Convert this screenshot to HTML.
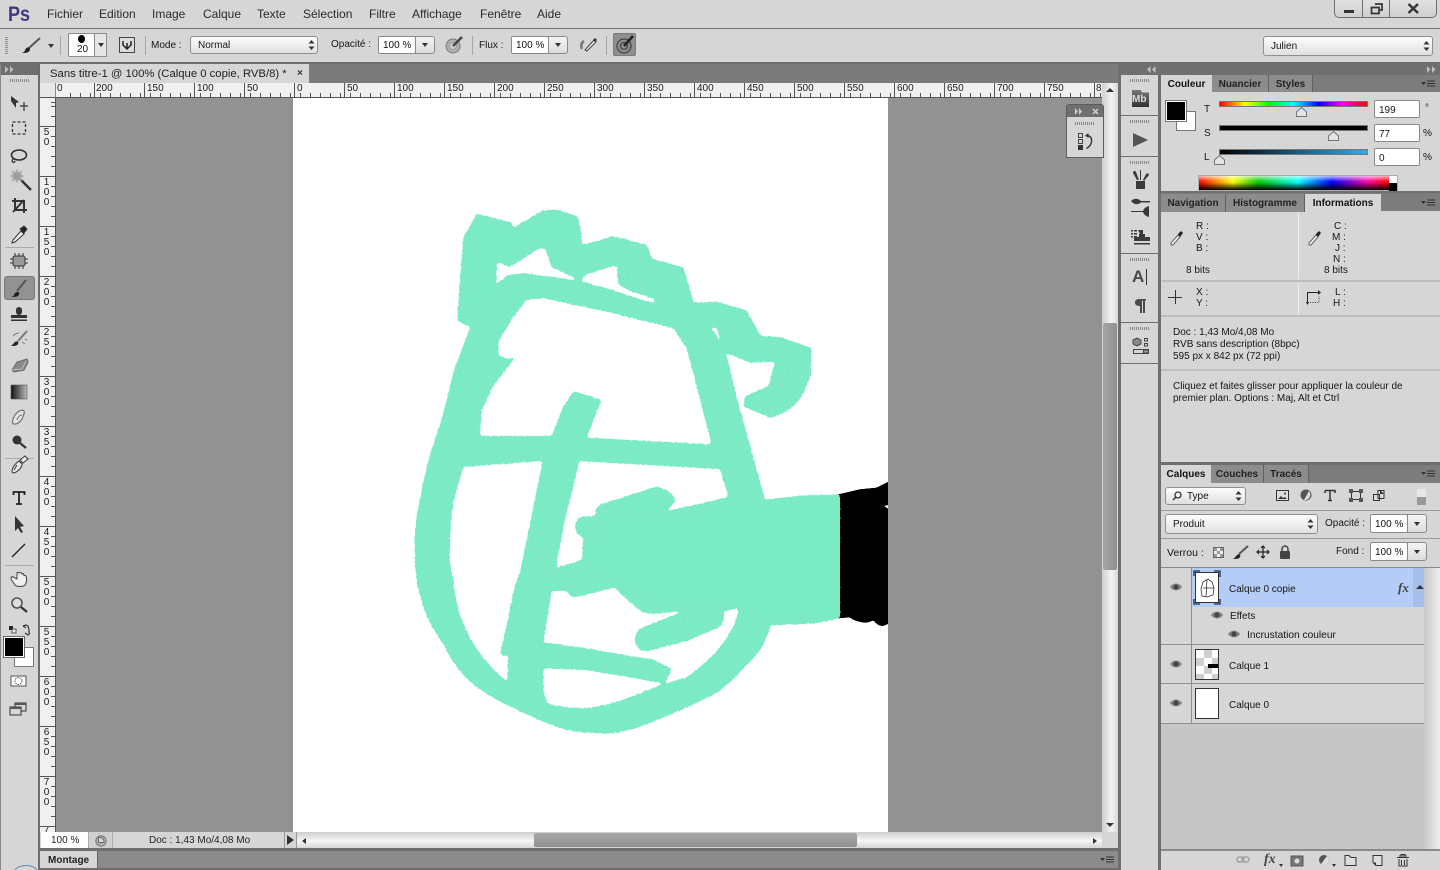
<!DOCTYPE html>
<html lang="fr"><head><meta charset="utf-8"><title>Photoshop</title>
<style>
html,body{margin:0;padding:0;width:1440px;height:870px;overflow:hidden;background:#d6d6d6}
div,span,svg{position:absolute;box-sizing:border-box}
svg{overflow:visible}
.t{font:10px "Liberation Sans",sans-serif;color:#151515;white-space:nowrap;line-height:12px;margin-top:1px}
.m{font-size:12px;color:#2a2a2a;top:8px;margin-top:0}
.r{font:10px "Liberation Sans",sans-serif;color:#1b1b1b;top:83px;line-height:11px}
.v{font:10px/10px "Liberation Sans",sans-serif;color:#1b1b1b;left:43px;width:7px;text-align:center;white-space:pre-line}
.inp{background:#fff;border:1px solid #8a8a8a;border-radius:2px}
.sel{background:linear-gradient(#fdfdfd,#e0e0e0);border:1px solid #8f8f8f;border-radius:3px}
.dd{background:linear-gradient(#f4f4f4,#dcdcdc);border:1px solid #8a8a8a;border-radius:0 3px 3px 0}
.pt{font:bold 10px/19px "Liberation Sans",sans-serif;color:#222;position:absolute;text-align:center;white-space:nowrap;border-right:1px solid #606060;background:#8c8c8c}
.on{background:#d6d6d6;border-right:0;color:#111}
.line{background:#6e6e6e}
.hl{background:#efefef}
.grip{height:3px;background:repeating-linear-gradient(90deg,#8a8a8a 0 1px,transparent 1px 2px)}
</style></head><body>
<div style="left:0;top:0;width:1440px;height:870px;overflow:hidden;background:#d6d6d6">

<!-- MENU BAR -->
<div class="t" style="left:8px;top:2px;font:bold 21px/24px 'Liberation Sans',sans-serif;color:#3f3a80;transform:scaleX(.86);transform-origin:left">Ps</div>
<span class="t m" style="left:47px">Fichier</span>
<span class="t m" style="left:99px">Edition</span>
<span class="t m" style="left:152px">Image</span>
<span class="t m" style="left:203px">Calque</span>
<span class="t m" style="left:257px">Texte</span>
<span class="t m" style="left:303px">Sélection</span>
<span class="t m" style="left:369px">Filtre</span>
<span class="t m" style="left:412px">Affichage</span>
<span class="t m" style="left:480px">Fenêtre</span>
<span class="t m" style="left:537px">Aide</span>
<div style="left:1334px;top:-2px;width:103px;height:20px;border:1px solid #6e6e6e;border-radius:0 0 5px 5px;background:linear-gradient(#e2e2e2,#cfcfcf)"></div>
<div class="line" style="left:1362px;top:0;width:1px;height:18px"></div>
<div class="line" style="left:1389px;top:0;width:1px;height:18px"></div>
<div style="left:1344px;top:10px;width:10px;height:3px;background:#333"></div>
<svg style="left:1370px;top:3px" width="14" height="12"><path d="M5 1h7v6h-2M1.500 4.500h7.500v6h-7.500z" fill="none" stroke="#333" stroke-width="1.700"/></svg>
<svg style="left:1407px;top:3px" width="13" height="11"><path d="M1.500 1L11 10M11 1L1.500 10" fill="none" stroke="#333" stroke-width="2.400"/></svg>

<!-- OPTIONS BAR -->
<div class="line" style="left:0;top:28px;width:1440px;height:1px"></div>
<div class="line" style="left:0;top:62px;width:1440px;height:2px"></div>
<div style="left:5px;top:37px;width:3px;height:18px;background:repeating-linear-gradient(#8f8f8f 0 1px,transparent 1px 2px)"></div>
<svg style="left:20px;top:37px" width="22" height="18"><path d="M20 1L9 11" stroke="#555" stroke-width="2" fill="none"/><path d="M2 16c3 0 5 0 7-1.500 1.500-1.500 1-3.500 0-4-2-.5-3.500 1-4 3-.5 1-1.500 1.800-3 2.500z" fill="#222"/></svg>
<div style="left:48px;top:44px;border:3px solid transparent;border-top:4px solid #333"></div>
<div style="left:60px;top:36px;width:1px;height:19px;background:#a5a5a5"></div>
<div style="left:68px;top:33px;width:39px;height:24px;background:#fff;border:1px solid #8c8c8c;border-radius:2px"></div>
<div style="left:94px;top:33px;width:13px;height:24px;background:#e6e6e6;border:1px solid #8c8c8c"></div>
<div style="left:98px;top:43px;border:3px solid transparent;border-top:4px solid #333"></div>
<div style="left:78px;top:35px;width:7px;height:8px;background:#000;border-radius:50%"></div>
<span class="t" style="left:77px;top:43px">20</span>
<svg style="left:119px;top:37px" width="16" height="16"><rect x=".5" y=".5" width="15" height="15" fill="#dcdcdc" stroke="#444"/><path d="M4 4v4l4 4 4-4V4M8 6v6" fill="none" stroke="#222" stroke-width="1.500"/></svg>
<div style="left:145px;top:36px;width:1px;height:19px;background:#a5a5a5"></div>
<span class="t" style="left:151px;top:39px">Mode :</span>
<div class="sel" style="left:190px;top:36px;width:128px;height:18px"></div>
<span class="t" style="left:198px;top:39px">Normal</span>
<svg style="left:308px;top:40px" width="7" height="10"><path d="M3.500 0L6.500 3.500H.5zM3.500 10L6.500 6.500H.5z" fill="#333"/></svg>
<span class="t" style="left:331px;top:38px">Opacité :</span>
<div class="inp" style="left:378px;top:36px;width:38px;height:18px"></div>
<div class="dd" style="left:415px;top:36px;width:20px;height:18px"></div>
<span class="t" style="left:383px;top:39px;color:#111">100 %</span>
<div style="left:422px;top:43px;border:3px solid transparent;border-top:4px solid #333"></div>
<svg style="left:445px;top:35px" width="19" height="19"><circle cx="8" cy="11" r="7" fill="#b0b0b0" stroke="#777"/><circle cx="8" cy="11" r="3.500" fill="#d0d0d0" stroke="#999"/><path d="M8 11L17 2" stroke="#444" stroke-width="2.500"/></svg>
<div style="left:472px;top:36px;width:1px;height:19px;background:#a5a5a5"></div>
<span class="t" style="left:479px;top:39px">Flux :</span>
<div class="inp" style="left:511px;top:36px;width:38px;height:18px"></div>
<div class="dd" style="left:548px;top:36px;width:20px;height:18px"></div>
<span class="t" style="left:516px;top:39px;color:#111">100 %</span>
<div style="left:555px;top:43px;border:3px solid transparent;border-top:4px solid #333"></div>
<svg style="left:579px;top:36px" width="19" height="17"><path d="M5 5A6 6 0 0 0 3 13" stroke="#777" stroke-width="2.500" fill="none"/><path d="M6 14L15 4l2 2-9 9z" fill="#eee" stroke="#444"/><path d="M14 4l2-2 2 2-2 2z" fill="#333"/></svg>
<div style="left:606px;top:36px;width:1px;height:19px;background:#a5a5a5"></div>
<div style="left:613px;top:33px;width:23px;height:23px;background:#8f8f8f;border:1px solid #7a7a7a;border-radius:2px"></div>
<svg style="left:614px;top:34px" width="21" height="21"><circle cx="10" cy="12" r="7" fill="none" stroke="#444" stroke-width="1.300"/><circle cx="10" cy="12" r="3.500" fill="none" stroke="#444" stroke-width="1.300"/><path d="M10 12L19 2" stroke="#222" stroke-width="2.500"/></svg>
<div class="sel" style="left:1263px;top:36px;width:170px;height:20px"></div>
<span class="t" style="left:1271px;top:40px">Julien</span>
<svg style="left:1423px;top:41px" width="7" height="10"><path d="M3.500 0L6.500 3.500H.5zM3.500 10L6.500 6.500H.5z" fill="#333"/></svg>

<!-- LEFT TOOLBAR -->
<div style="left:1px;top:64px;width:37px;height:11px;background:#6f6f6f"></div>
<svg style="left:5px;top:66px" width="9" height="7"><path d="M0 0l3.500 3.500L0 7zM5 0l3.500 3.500L5 7z" fill="#bdbdbd"/></svg>
<div class="grip" style="left:10px;top:79px;width:19px"></div>
<div style="left:38px;top:64px;width:2px;height:806px;background:#6b6b6b"></div>
<div style="left:0;top:64px;width:1px;height:806px;background:#8a8a8a"></div>
<div style="left:4px;top:276px;width:31px;height:24px;background:#929292;border:1px solid #787878;border-radius:3px"></div>
<div style="left:5px;top:247px;width:29px;height:1px;background:#aaa"></div>
<div style="left:5px;top:458px;width:29px;height:1px;background:#aaa"></div>
<div style="left:5px;top:565px;width:29px;height:1px;background:#aaa"></div>
<svg style="left:0;top:64px" width="40" height="806" fill="none" stroke="#333">
<defs><linearGradient id="gr"><stop offset="0" stop-color="#111"/><stop offset="1" stop-color="#bbb"/></linearGradient></defs>
<g transform="translate(0,2)"><path d="M11 30l8 6-3 1 0 5-5-7z" fill="#333" stroke="none"/><path d="M24 36v9M20 40h8" stroke-width="1.200"/></g>
<g transform="translate(0,-2.500)"><rect x="12.500" y="60.500" width="13" height="12" stroke-dasharray="3 2" stroke-width="1.300"/></g>
<g transform="translate(0,1)"><ellipse cx="19" cy="90" rx="7.500" ry="5" stroke-width="1.600"/><path d="M13 94c-2 3 1 5 2 2" stroke-width="1.300"/></g>
<g transform="translate(0,-2)"><path d="M21 118l10 10" stroke-width="2.400"/><circle cx="17" cy="114" r="5" fill="#aaa" stroke="none"/><path d="M17 107v14M10 114h14M12 109l10 10M22 109l-10 10" stroke="#999" stroke-width=".9"/></g>
<g transform="translate(0,-1)"><path d="M15 135v12h12M12 138h12v12M13 149l11-12" stroke-width="2"/></g>
<g transform="translate(0,-3)"><path d="M13 179l8-9 3 3-9 8-3 1z" fill="#eee" stroke-width="1"/><path d="M20 168l4-3 3 3-3 4z" fill="#222"/></g>
<g transform="translate(0,-1)"><rect x="13" y="193" width="12" height="10" rx="2" fill="#999" stroke="#333"/><path d="M15 190v3M19 190v3M23 190v3M15 203v3M19 203v3M23 203v3M10 196h3M10 200h3M25 196h3M25 200h3" stroke-width="1"/></g>
<path d="M26 216L17 227" stroke="#555" stroke-width="2"/><path d="M11 233c3 0 6 0 7.500-1.500 1-1.500 1-3.500-.5-3.500-2 0-3.500 1-4 3-.5 1-1.500 1.500-3 2z" fill="#222" stroke="none"/>
<rect x="16" y="243" width="6" height="8" rx="3" fill="#333" stroke="none"/><rect x="11" y="251" width="16" height="3" fill="#333" stroke="none"/><rect x="11" y="255.500" width="16" height="1.500" fill="#333" stroke="none"/>
<g transform="translate(0,-4)"><path d="M27 271L18 281" stroke="#777" stroke-width="2"/><path d="M11 286c3 0 6 0 7-2s0-3-2-2.500-2.500 3-5 4.500z" fill="#222" stroke="none"/><path d="M13 276c2-2 4-3 6-3M22 282l3 2M25 279l2 1" stroke="#777" stroke-width="1"/></g>
<g transform="translate(0,-1)"><path d="M12 307l5-8 10-3 1 3-4 8-10 2z" fill="#8a8a8a" stroke="#666"/><path d="M12 307l10-1 4-8" stroke="#ccc" stroke-width=".8"/></g>
<rect x="11" y="321" width="16" height="14" fill="url(#gr)" stroke="#555" stroke-width=".6"/>
<g transform="translate(0,2)"><path d="M13 358c-1-3 0-6 2-9 3-4 7-6 9-4 1 3-1 4-1 6-1 3-4 6-7 7zM17 354c1-3 3-5 5-5" fill="#e4e4e4" stroke="#666" stroke-width="1.100"/></g>
<g transform="translate(0,1)"><circle cx="17" cy="375" r="4.500" fill="#333" stroke="none"/><path d="M20 378l6 5" stroke-width="2.200"/></g>
<g transform="translate(0,-1)"><path d="M12 409c0-5 4-9 7-11l3 3c0 3-3 7-8 9zM20 397l5-4 3 3-5 4zM17 402l-3 5" fill="#e8e8e8" stroke="#444" stroke-width="1.100"/></g>
<path d="M13.500 431v-3h11v3M19 428v12M16 440h6" stroke="#222" stroke-width="1.800"/>
<g transform="translate(0,5)"><path d="M15 449v15l3-3 3 5 2-1-3-5 4-1z" fill="#333" stroke="none" transform="translate(0,-2)"/></g>
<path d="M12 493L25 480" stroke="#222" stroke-width="1.300"/>
<g transform="translate(0,4)"><path d="M11 511l4 6c2 2 8 2 10 0 2-3 2-6 1-9-1-1-2-1-2 0 0-2-1-3-2-2-1-2-2-2-3-1-1-1-2-1-2 0v6l-4-2c-1-1-2 0-2 2z" fill="#eee" stroke="#444"/></g>
<circle cx="17" cy="539" r="5" fill="#ddd" stroke="#555" stroke-width="1.600"/><path d="M21 543l6 5" stroke-width="2.200"/>
<g transform="translate(0,2)"><path d="M9 560h4v4h-4z" fill="#222" stroke="none"/><path d="M12 563h4v4h-4z" fill="#eee" stroke-width=".8"/><path d="M23 560l3-1 2 1 1 4v3M25 567l3 2 2-2M23 560l3 2" stroke-width="1.200"/></g>
<rect x="11" y="612" width="15" height="10" fill="#fff" stroke="#555"/><circle cx="18.500" cy="617" r="3.500" stroke="#555" stroke-dasharray="1.500 1"/>
<rect x="15" y="639" width="11" height="8" fill="#d6d6d6" stroke-width="1"/><rect x="15" y="639" width="11" height="2" fill="#555" stroke="none"/><rect x="10" y="643" width="11" height="8" fill="#d6d6d6" stroke-width="1"/><rect x="10" y="643" width="11" height="2" fill="#555" stroke="none"/>
</svg>
<div style="left:14px;top:647px;width:20px;height:20px;background:#fff;border:1px solid #777"></div>
<div style="left:4px;top:637px;width:20px;height:20px;background:#000;border:1px solid #fff;outline:1px solid #666"></div>

<!-- DOCUMENT -->
<div style="left:40px;top:64px;width:1078px;height:19px;background:#7b7b7b"></div>
<div style="left:40px;top:64px;width:269px;height:19px;background:#d6d6d6"></div>
<span class="t" style="left:50px;top:67px;font-size:11.3px;color:#222">Sans titre-1 @ 100% (Calque 0 copie, RVB/8) *</span>
<span class="t" style="left:297px;top:67px;font-weight:bold;color:#333">×</span>
<!-- rulers -->
<div style="left:40px;top:83px;width:1062px;height:15px;background:#f0f0f0;border-bottom:1px solid #555"></div>
<div style="left:57px;top:83px;width:1045px;height:14px;background:repeating-linear-gradient(90deg,transparent 0 9px,#555 9px 10px) 4px 10px/100% 4px no-repeat"></div>
<div style="left:44px;top:83px;width:1058px;height:14px;background:repeating-linear-gradient(90deg,#555 0 1px,transparent 1px 50px) 0 0 repeat-y"></div>
<div style="left:40px;top:83px;width:16px;height:15px;background:#e8e8e8;border-right:1px solid #888;border-bottom:1px solid #555"></div>
<span class="r" style="left:57px">0</span><span class="r" style="left:96px">200</span><span class="r" style="left:147px">150</span><span class="r" style="left:197px">100</span><span class="r" style="left:247px">50</span>
<span class="r" style="left:297px">0</span><span class="r" style="left:347px">50</span><span class="r" style="left:397px">100</span><span class="r" style="left:447px">150</span><span class="r" style="left:497px">200</span><span class="r" style="left:547px">250</span><span class="r" style="left:597px">300</span><span class="r" style="left:647px">350</span><span class="r" style="left:697px">400</span><span class="r" style="left:747px">450</span><span class="r" style="left:797px">500</span><span class="r" style="left:847px">550</span><span class="r" style="left:897px">600</span><span class="r" style="left:947px">650</span><span class="r" style="left:997px">700</span><span class="r" style="left:1047px">750</span><span class="r" style="left:1096px">8</span>

<div style="left:40px;top:98px;width:16px;height:734px;background:#f0f0f0;border-right:1px solid #555;overflow:hidden"></div>
<div style="left:51px;top:98px;width:4px;height:734px;background:repeating-linear-gradient(#555 0 1px,transparent 1px 10px);background-position:0 8px"></div>
<div style="left:40px;top:76px;width:15px;height:756px;background:repeating-linear-gradient(#555 0 1px,transparent 1px 50px);clip-path:inset(22px 0 0 0)"></div>
<div class="v" style="top:128px">5
0</div><div class="v" style="top:178px">1
0
0</div><div class="v" style="top:228px">1
5
0</div><div class="v" style="top:278px">2
0
0</div><div class="v" style="top:328px">2
5
0</div><div class="v" style="top:378px">3
0
0</div><div class="v" style="top:428px">3
5
0</div><div class="v" style="top:478px">4
0
0</div><div class="v" style="top:528px">4
5
0</div><div class="v" style="top:578px">5
0
0</div><div class="v" style="top:628px">5
5
0</div><div class="v" style="top:678px">6
0
0</div><div class="v" style="top:728px">6
5
0</div><div class="v" style="top:778px">7
0
0</div><div class="v" style="top:827px;height:5px;overflow:hidden;line-height:7px">7</div>

<div style="left:56px;top:98px;width:1046px;height:734px;background:#929292"></div>
<div style="left:293px;top:98px;width:595px;height:734px;background:#fff"></div>

<!-- ARTWORK -->
<svg style="left:400px;top:200px" width="500" height="540" viewBox="0 0 1500 1568" preserveAspectRatio="none">
<defs>
<filter id="rg" filterUnits="userSpaceOnUse" x="0" y="0" width="1500" height="1568" color-interpolation-filters="sRGB">
<feGaussianBlur stdDeviation="4" result="b"/>
<feComponentTransfer in="b" result="c"><feFuncA type="linear" slope="9" intercept="-4"/></feComponentTransfer>
<feTurbulence type="fractalNoise" baseFrequency=".14" numOctaves="2" seed="4" result="n"/>
<feDisplacementMap in="c" in2="n" scale="7" xChannelSelector="R" yChannelSelector="G" result="d"/>
<feTurbulence type="fractalNoise" baseFrequency=".26" numOctaves="1" seed="11" result="s"/>
<feColorMatrix in="s" type="matrix" values="0 0 0 0 .87  0 0 0 0 .85  0 0 0 0 .85  14 0 0 0 -9.700" result="sp"/>
<feComposite in="sp" in2="d" operator="in" result="spk"/>
<feMerge><feMergeNode in="d"/><feMergeNode in="spk"/></feMerge>
</filter>
<filter id="rb" filterUnits="userSpaceOnUse" x="1300" y="780" width="200" height="500"><feGaussianBlur stdDeviation="3"/><feComponentTransfer><feFuncA type="linear" slope="9" intercept="-4"/></feComponentTransfer></filter>
</defs>
<path filter="url(#rb)" d="M1300 858L1380 840 1430 835 1464 818 1490 818 1490 1240 1464 1230Q1440 1248 1420 1220 1400 1232 1380 1225 1360 1222 1350 1212L1300 1216z" fill="#000"/>
<rect x="1464" y="780" width="36" height="500" fill="#929292"/>
<path d="M1452 888L1464 886 1464 896z" fill="#fff"/>
<g filter="url(#rg)">
<path fill="#7aebc5" fill-rule="evenodd" d="M230 40L335 65 340 80 430 30 470 28 535 48 548 130 640 105 740 130 755 170 850 195 882 298 950 295 1040 320 1082 395 1140 398 1235 430 1232 510Q1210 570 1180 600 1145 625 1110 632L1030 600 1035 570 1105 540 1125 470 1050 472 978 445 1018 600 1095 870 1200 858 1320 855 1320 1215 1240 1230 1112 1235Q1090 1310 1040 1350 1000 1395 960 1425 880 1470 720 1530 640 1555 600 1548 530 1550 470 1530 400 1505 330 1470 260 1440 200 1390 160 1350 130 1290 85 1230 70 1180 45 1110 45 1040 40 980 50 920 70 810 90 740L130 620 160 500 210 370 172 350 178 250 190 110z
M292 180L328 195 420 140 435 142 455 195 540 235 520 232 370 212 320 220 288 245z
M650 190L560 215 540 235 640 262 745 295 765 298 760 285 690 265 655 245z
M380 290L430 285 620 325 820 372 860 430 935 710 560 690 605 580 520 555 490 600 455 685 240 685 245 610 280 540 345 458 320 460 295 450 295 410 340 340z
M930 370L950 372 970 430 945 385z
M190 775L428 758 360 1080 345 1120 300 1320 325 1325 322 1398Q290 1375 260 1340 215 1290 190 1230 165 1170 160 1100 145 1050 150 1010 150 920 165 860z
M538 758L960 782 985 862 795 905Q825 885 825 870 820 845 770 832L600 885Q585 895 585 918L550 918Q525 925 525 950 530 975 550 980L545 1045 468 1068 490 950z
M455 1135L500 1135Q515 1160 535 1152L645 1125Q680 1165 725 1195 750 1205 780 1200L840 1195 865 1188 810 1210 730 1240Q700 1255 705 1285 715 1315 750 1308L860 1280 960 1240Q975 1225 972 1195L1015 1185Q1010 1240 950 1310 900 1360 860 1385L795 1405 815 1362 760 1335 550 1300 430 1285z
M430 1360L560 1365 770 1400 790 1405 700 1440Q620 1470 560 1475 480 1475 440 1460L430 1420z"/>
</g>
<path fill="#7aebc5" d="M600 920L800 925 1000 880 1095 885 1320 865 1320 1210 1110 1225 1000 1170 870 1170 760 1180 660 1110 560 1040zM730 1270L960 1200 960 1230 740 1295zM610 900L770 850 810 875 780 915zM200 120L240 55 330 80 340 100 430 45 520 60 530 140 430 125 320 180 285 165 280 300 190 330z"/>
</svg>

<!-- v scrollbar -->
<div style="left:1102px;top:83px;width:16px;height:749px;background:linear-gradient(90deg,#cfcfcf,#f3f3f3 60%,#d8d8d8)"></div>
<div style="left:1106px;top:88px;border:4px solid transparent;border-bottom:4px solid #333;border-top:0"></div>
<div style="left:1106px;top:823px;border:4px solid transparent;border-top:4px solid #333;border-bottom:0"></div>
<div style="left:1103px;top:323px;width:14px;height:247px;background:linear-gradient(90deg,#a5a5a5,#909090);border-radius:2px"></div>

<!-- floating history -->
<div style="left:1066px;top:104px;width:38px;height:54px;background:#d6d6d6;border:1px solid #5d5d5d;border-radius:3px 3px 0 0"></div>
<div style="left:1067px;top:105px;width:36px;height:12px;background:#6f6f6f"></div>
<svg style="left:1075px;top:108px" width="26" height="8"><path d="M0 0l3 3.500L0 7zM4 0l3 3.500L4 7z" fill="#ccc"/><path d="M18 1l5 5M23 1l-5 5" stroke="#d0d0d0" stroke-width="1.500"/></svg>
<div class="grip" style="left:1075px;top:122px;width:19px"></div>
<svg style="left:1078px;top:133px" width="22" height="20"><rect x=".5" y=".5" width="4" height="4" fill="none" stroke="#444"/><rect x=".5" y="6.500" width="4" height="4" fill="none" stroke="#444"/><rect y="12" width="5" height="5" fill="#333"/><path d="M7 2.500l3.500-2.500v5z" fill="#333"/><path d="M9 2.500c4 .5 5 3 4.500 6.500-.5 3-2.500 5-5 6.500" fill="none" stroke="#333" stroke-width="1.400"/></svg>

<!-- status -->
<div style="left:40px;top:832px;width:1078px;height:17px;background:#d6d6d6"></div>
<div style="left:41px;top:832px;width:47px;height:16px;background:#fff"></div>
<span class="t" style="left:51px;top:834px;color:#222">100 %</span>
<div style="left:88px;top:832px;width:25px;height:16px;background:#d0d0d0;border:solid #aaa;border-width:0 1px"></div>
<svg style="left:95px;top:835px" width="12" height="12"><circle cx="6" cy="6" r="5.200" fill="#b0b0b0" stroke="#777"/><path d="M3.500 2.500h3l2.500 3v2h-5.500z" fill="#d6d6d6" stroke="#555" stroke-width=".8"/></svg>
<span class="t" style="left:149px;top:834px;color:#222">Doc : 1,43 Mo/4,08 Mo</span>
<div style="left:284px;top:832px;width:13px;height:16px;background:#d6d6d6;border-left:1px solid #999;border-right:1px solid #999"></div>
<svg style="left:287px;top:835px" width="7" height="10"><path d="M0 0l7 5-7 5z" fill="#333"/></svg>
<div style="left:297px;top:832px;width:805px;height:16px;background:linear-gradient(#cfcfcf,#f5f5f5 55%,#d6d6d6)"></div>
<svg style="left:302px;top:838px" width="4" height="6"><path d="M4 0L0 3l4 3z" fill="#333"/></svg>
<svg style="left:1093px;top:838px" width="4" height="6"><path d="M0 0l4 3-4 3z" fill="#333"/></svg>
<div style="left:534px;top:833px;width:323px;height:14px;background:linear-gradient(#a8a8a8,#8f8f8f);border-radius:2px"></div>
<div class="line" style="left:40px;top:848px;width:1080px;height:3px"></div>
<div style="left:40px;top:851px;width:1078px;height:17px;background:#8b8b8b"></div>
<div style="left:40px;top:851px;width:58px;height:17px;background:#d6d6d6;border-right:1px solid #666"></div>
<span class="t" style="left:48px;top:854px;font-weight:bold;color:#222">Montage</span>
<svg style="left:1100px;top:856px" width="15" height="8"><path d="M0 2h5L2.500 5z" fill="#333"/><path d="M6 1h8M6 3.500h8M6 6h8" stroke="#333"/></svg>
<div class="line" style="left:40px;top:868px;width:1080px;height:2px"></div>
<div style="left:14px;top:865px;width:24px;height:14px;border:1px solid #5f8fb5;border-radius:50%;background:#d6d6d6"></div>

<!-- RIGHT DOCK -->
<div style="left:1118px;top:62px;width:3px;height:808px;background:#6e6e6e"></div>
<div style="left:1121px;top:64px;width:319px;height:11px;background:#6f6f6f"></div>
<svg style="left:1147px;top:66px" width="9" height="7"><path d="M3.500 0L0 3.500 3.500 7zM8.500 0L5 3.500 8.500 7z" fill="#bdbdbd"/></svg>
<svg style="left:1427px;top:66px" width="9" height="7"><path d="M0 0l3.500 3.500L0 7zM5 0l3.500 3.500L5 7z" fill="#bdbdbd"/></svg>
<div style="left:1121px;top:75px;width:37px;height:795px;background:#d6d6d6"></div>
<div class="line" style="left:1158px;top:75px;width:3px;height:795px"></div>
<div class="line" style="left:1121px;top:115px;width:37px;height:1px"></div>
<div class="line" style="left:1121px;top:156px;width:37px;height:1px"></div>
<div class="line" style="left:1121px;top:253px;width:37px;height:1px"></div>
<div class="line" style="left:1121px;top:322px;width:37px;height:1px"></div>
<div class="line" style="left:1121px;top:363px;width:37px;height:1px"></div>
<div class="grip" style="left:1130px;top:79px;width:19px"></div>
<div class="grip" style="left:1130px;top:120px;width:19px"></div>
<div class="grip" style="left:1130px;top:161px;width:19px"></div>
<div class="grip" style="left:1130px;top:258px;width:19px"></div>
<div class="grip" style="left:1130px;top:327px;width:19px"></div>
<div style="left:1132px;top:90px;width:17px;height:17px;background:linear-gradient(#777,#333);clip-path:polygon(0 0,50% 0,60% 15%,100% 15%,100% 100%,0 100%)"></div>
<span class="t" style="left:1132px;top:93px;color:#ddd;font:bold 10px/12px 'Liberation Sans',sans-serif">Mb</span>
<svg style="left:1133px;top:133px" width="16" height="14"><path d="M0 0l15 7L0 14z" fill="#555"/></svg>
<svg style="left:1131px;top:170px" width="19" height="80" fill="#3a3a3a" stroke="none">
<path d="M5 11h9v8H5z"/><path d="M6 10L2 3c0-2 2-3 3-1l3 8zM9 10V0h1v10zM12 10l3-6c1-1 3-1 3 1l-5 6z"/>
<path d="M0 31c3-3 7-3 10 0h9v1.500h-9c-3 2.500-7 2.500-10-1.500zM0 41h12c1-3 3-4 6-5v11c-3-1-5-2-6-5H0z"/>
<path d="M7 60h5v4h2v3h5v4H3v-4h5v-3h1zM3 73h16v1.500H3zM0 60h2v1.500H0zM3 60h3v1.500H3zM0 63h2v1.500H0zM3 63h3v1.500H3zM0 66h2v1.500H0zM3 66h3v1.500H3z"/>
</svg>
<span class="t" style="left:1132px;top:266px;font:bold 17px/20px 'Liberation Sans',sans-serif;color:#4a4a4a">A</span>
<div style="left:1146px;top:269px;width:1px;height:16px;background:#333"></div>
<svg style="left:1134px;top:298px" width="12" height="16"><path d="M5 1h7v1.500h-1V15H9V2.500H8V15H6V8C3 8 1 7 1 4.500 1 2 3 1 5 1z" fill="#4a4a4a"/></svg>
<svg style="left:1132px;top:337px" width="18" height="18" fill="none" stroke="#444"><path d="M1 3l4-2 4 2v4l-4 2-4-2z" fill="#888"/><rect x="12.500" y="1.500" width="3" height="2.500"/><rect x="12.500" y="6.500" width="3" height="2.500"/><rect x="1.500" y="12.500" width="15" height="4"/><rect x="11.500" y="13" width="5" height="3" fill="#999"/></svg>

<!-- COULEUR panel -->
<div style="left:1161px;top:75px;width:279px;height:115px;background:#d6d6d6"></div>
<div style="left:1161px;top:75px;width:279px;height:17px;background:#7c7c7c"></div>
<div class="pt on" style="left:1161px;top:75px;width:51px;height:18px">Couleur</div>
<div class="pt" style="left:1212px;top:75px;width:57px;height:17px">Nuancier</div>
<div class="pt" style="left:1269px;top:75px;width:44px;height:17px">Styles</div>
<svg style="left:1421px;top:80px" width="15" height="8"><path d="M0 2h5L2.500 5z" fill="#333"/><path d="M6 1h8M6 3.500h8M6 6h8" stroke="#333"/></svg>
<div style="left:1176px;top:111px;width:20px;height:20px;background:#fff;border:1px solid #777"></div>
<div style="left:1166px;top:101px;width:20px;height:20px;background:#000;border:1px solid #fff;outline:1px solid #777"></div>
<span class="t" style="left:1204px;top:103px">T</span><span class="t" style="left:1204px;top:127px">S</span><span class="t" style="left:1204px;top:151px">L</span>
<div style="left:1219px;top:101px;width:149px;height:6px;border:1px solid #777;background:linear-gradient(90deg,#f00,#ff0 17%,#0f0 33%,#0ff 50%,#00f 67%,#f0f 83%,#f00)"></div>
<div style="left:1219px;top:125px;width:149px;height:6px;border:1px solid #777;background:#000"></div>
<div style="left:1219px;top:149px;width:149px;height:6px;border:1px solid #777;background:linear-gradient(90deg,#000,#33aaee)"></div>
<svg style="left:1296px;top:107px" width="11" height="10"><path d="M5.500 .5L10.500 5v4.500H.5V5z" fill="#e4e4e4" stroke="#777"/></svg>
<svg style="left:1328px;top:131px" width="11" height="10"><path d="M5.500 .5L10.500 5v4.500H.5V5z" fill="#e4e4e4" stroke="#777"/></svg>
<svg style="left:1214px;top:155px" width="11" height="10"><path d="M5.500 .5L10.500 5v4.500H.5V5z" fill="#e4e4e4" stroke="#777"/></svg>
<div class="inp" style="left:1374px;top:100px;width:46px;height:18px"></div>
<div class="inp" style="left:1374px;top:124px;width:46px;height:18px"></div>
<div class="inp" style="left:1374px;top:148px;width:46px;height:18px"></div>
<span class="t" style="left:1379px;top:104px">199</span><span class="t" style="left:1379px;top:128px">77</span><span class="t" style="left:1379px;top:152px">0</span>
<span class="t" style="left:1425px;top:102px">°</span><span class="t" style="left:1423px;top:127px">%</span><span class="t" style="left:1423px;top:151px">%</span>
<div style="left:1198px;top:175px;width:200px;height:16px;background:linear-gradient(rgba(255,255,255,.7) 0,transparent 40%),linear-gradient(transparent 45%,#000),linear-gradient(90deg,#f00,#ff0 17%,#0c0 30%,#0ff 50%,#00f 67%,#f0a 85%,#f00 95%);border:1px solid #aaa"></div>
<div style="left:1389px;top:176px;width:8px;height:7px;background:#fff"></div>
<div style="left:1389px;top:183px;width:8px;height:8px;background:#000"></div>
<div style="left:1161px;top:191px;width:279px;height:2px;background:#707070"></div>

<!-- INFO panel -->
<div style="left:1161px;top:193px;width:279px;height:269px;background:#d6d6d6"></div>
<div style="left:1161px;top:193px;width:279px;height:18px;background:#7c7c7c"></div>
<div class="pt" style="left:1161px;top:194px;width:65px;height:18px">Navigation</div>
<div class="pt" style="left:1226px;top:194px;width:79px;height:18px">Histogramme</div>
<div class="pt on" style="left:1305px;top:194px;width:76px;height:18px">Informations</div>
<svg style="left:1421px;top:199px" width="15" height="8"><path d="M0 2h5L2.500 5z" fill="#333"/><path d="M6 1h8M6 3.500h8M6 6h8" stroke="#333"/></svg>
<div class="hl" style="left:1298px;top:214px;width:1px;height:65px"></div>
<div style="left:1162px;top:280px;width:278px;height:2px;background:#bdbdbd"></div>
<div class="hl" style="left:1298px;top:283px;width:1px;height:31px"></div>
<div style="left:1161px;top:315px;width:279px;height:2px;background:#bdbdbd"></div>
<div style="left:1161px;top:369px;width:279px;height:2px;background:#bdbdbd"></div>
<svg style="left:1170px;top:230px" width="14" height="15"><path d="M1 13l7-8 2 2-7 8-2 0z" fill="#eee" stroke="#444" stroke-width=".8"/><path d="M8 4l3-3 2 2-3 4z" fill="#222"/></svg>
<svg style="left:1308px;top:230px" width="14" height="15"><path d="M1 13l7-8 2 2-7 8-2 0z" fill="#eee" stroke="#444" stroke-width=".8"/><path d="M8 4l3-3 2 2-3 4z" fill="#222"/></svg>
<svg style="left:1168px;top:290px" width="16" height="16"><path d="M7.500 0v14M0 7.500h14" stroke="#333"/></svg>
<svg style="left:1306px;top:290px" width="16" height="16"><path d="M1.500 14V2.500h11" fill="none" stroke="#222"/><path d="M12 0v5l3-2.500zM0 12h3l-1.500 3z" fill="#222"/><path d="M4 12.500h9V6" stroke="#333" stroke-dasharray="1 1.500" fill="none"/></svg>
<span class="t" style="left:1196px;top:220px">R :</span><span class="t" style="left:1196px;top:231px">V :</span><span class="t" style="left:1196px;top:242px">B :</span><span class="t" style="left:1186px;top:264px">8 bits</span>
<span class="t" style="left:1334px;top:220px">C :</span><span class="t" style="left:1332px;top:231px">M :</span><span class="t" style="left:1335px;top:242px">J :</span><span class="t" style="left:1333px;top:253px">N :</span><span class="t" style="left:1324px;top:264px">8 bits</span>
<span class="t" style="left:1196px;top:286px">X :</span><span class="t" style="left:1196px;top:297px">Y :</span><span class="t" style="left:1335px;top:286px">L :</span><span class="t" style="left:1333px;top:297px">H :</span>
<span class="t" style="left:1173px;top:326px">Doc : 1,43 Mo/4,08 Mo</span>
<span class="t" style="left:1173px;top:338px">RVB sans description (8bpc)</span>
<span class="t" style="left:1173px;top:350px">595 px x 842 px (72 ppi)</span>
<span class="t" style="left:1173px;top:380px">Cliquez et faites glisser pour appliquer la couleur de</span>
<span class="t" style="left:1173px;top:392px">premier plan. Options : Maj, Alt et Ctrl</span>
<div style="left:1161px;top:462px;width:279px;height:3px;background:#6e6e6e"></div>

<!-- CALQUES panel -->
<div style="left:1161px;top:465px;width:279px;height:405px;background:#d6d6d6"></div>
<div style="left:1161px;top:465px;width:279px;height:18px;background:#7c7c7c"></div>
<div class="pt on" style="left:1161px;top:465px;width:50px;height:19px">Calques</div>
<div class="pt" style="left:1211px;top:465px;width:53px;height:18px">Couches</div>
<div class="pt" style="left:1264px;top:465px;width:45px;height:18px">Tracés</div>
<svg style="left:1421px;top:470px" width="15" height="8"><path d="M0 2h5L2.500 5z" fill="#333"/><path d="M6 1h8M6 3.500h8M6 6h8" stroke="#333"/></svg>
<div class="sel" style="left:1165px;top:487px;width:81px;height:18px"></div>
<svg style="left:1172px;top:491px" width="10" height="10"><circle cx="6" cy="4" r="3" fill="none" stroke="#333" stroke-width="1.300"/><path d="M4 6L1 9" stroke="#333" stroke-width="1.500"/></svg>
<span class="t" style="left:1187px;top:490px">Type</span>
<svg style="left:1235px;top:491px" width="7" height="10"><path d="M3.500 0L6.500 3.500H.5zM3.500 10L6.500 6.500H.5z" fill="#333"/></svg>
<svg style="left:1276px;top:489px" width="150" height="16">
<rect x=".5" y="1.500" width="12" height="10" fill="#ddd" stroke="#333"/><path d="M2 10l3-3 2 2 2-1 2 2z" fill="#333"/><circle cx="9" cy="4.500" r="1" fill="#333"/>
<circle cx="30" cy="6" r="5.500" fill="#555"/><path d="M33 2A5.500 5.500 0 0 1 28 11z" fill="#ddd"/>
<path d="M49 1.500h10v2.500M54 1.500v10M52 11.500h4M49 1.500v2.500" fill="none" stroke="#333" stroke-width="1.500"/>
<path d="M75.500 2.500h9v8h-9z" fill="none" stroke="#333"/><path d="M73 0h4v4h-4zM83 0h4v4h-4zM73 9h4v4h-4zM83 9h4v4h-4z" fill="#555"/>
<path d="M102 1.500h6v8h-6zM97.500 5.500h6v6h-6z" fill="#ddd" stroke="#333"/><path d="M104 1l4 4h-4z" fill="#333"/>
<rect x="141" y="0" width="9" height="16" fill="#e8e8e8"/><rect x="141" y="8" width="9" height="8" fill="#999"/>
</svg>
<div style="left:1161px;top:510px;width:279px;height:1px;background:#9a9a9a"></div>
<div class="sel" style="left:1165px;top:514px;width:153px;height:20px"></div>
<span class="t" style="left:1173px;top:518px">Produit</span>
<svg style="left:1307px;top:519px" width="7" height="10"><path d="M3.500 0L6.500 3.500H.5zM3.500 10L6.500 6.500H.5z" fill="#333"/></svg>
<span class="t" style="left:1325px;top:517px">Opacité :</span>
<div class="inp" style="left:1370px;top:514px;width:38px;height:19px"></div>
<div class="dd" style="left:1407px;top:514px;width:20px;height:19px"></div>
<span class="t" style="left:1375px;top:518px;color:#111">100 %</span>
<div style="left:1414px;top:522px;border:3px solid transparent;border-top:4px solid #333"></div>
<div style="left:1161px;top:538px;width:279px;height:1px;background:#9a9a9a"></div>
<span class="t" style="left:1167px;top:546px;font-size:10.5px">Verrou :</span>
<svg style="left:1213px;top:545px" width="80" height="15">
<rect x=".5" y="2.500" width="10" height="10" fill="#eee" stroke="#666"/><path d="M1 3h3v3H1zM7 3h3v3H7zM4 6h3v3H4zM1 9h3v3H1zM7 9h3v3H7z" fill="#999"/>
<path d="M35 1L26 9" stroke="#555" stroke-width="2"/><path d="M20 14c3 0 6 0 7-2s0-3-2-2.500-2 3-5 4.500z" fill="#222"/>
<path d="M50 1v12M44 7h12M48 3l2-2 2 2M48 11l2 2 2-2M46 5l-2 2 2 2M54 5l2 2-2 2" fill="none" stroke="#222" stroke-width="1.200"/>
<rect x="67" y="6" width="10" height="8" rx="1" fill="#444"/><path d="M69 6V4a3 3 0 0 1 6 0v2" fill="none" stroke="#444" stroke-width="1.500"/>
</svg>
<span class="t" style="left:1336px;top:545px">Fond :</span>
<div class="inp" style="left:1370px;top:542px;width:38px;height:19px"></div>
<div class="dd" style="left:1407px;top:542px;width:20px;height:19px"></div>
<span class="t" style="left:1375px;top:546px;color:#111">100 %</span>
<div style="left:1414px;top:550px;border:3px solid transparent;border-top:4px solid #333"></div>
<div style="left:1161px;top:567px;width:279px;height:1px;background:#8a8a8a"></div>

<div style="left:1192px;top:568px;width:221px;height:39px;background:#b5cdf6"></div>
<div style="left:1413px;top:568px;width:11px;height:39px;background:#a7bfe8"></div>
<div style="left:1416px;top:585px;border:4px solid transparent;border-bottom:4px solid #333;border-top:0"></div>
<div style="left:1424px;top:568px;width:16px;height:282px;background:linear-gradient(90deg,#c8c8c8,#eeeeee)"></div>
<div style="left:1161px;top:724px;width:263px;height:126px;background:#c6c6c6"></div>
<div style="left:1191px;top:568px;width:1px;height:155px;background:#8f8f8f"></div>
<div style="left:1161px;top:644px;width:263px;height:1px;background:#8f8f8f"></div>
<div style="left:1161px;top:683px;width:263px;height:1px;background:#8f8f8f"></div>
<div style="left:1161px;top:723px;width:263px;height:1px;background:#8f8f8f"></div>
<!-- eyes -->
<svg style="left:1170px;top:582px" width="75" height="130">
<path d="M0 5c3-4.500 9-4.500 12 0-3 4.500-9 4.500-12 0z" fill="#808080"/><circle cx="6" cy="5" r="2.500" fill="#444"/>
<path d="M41 33c3-4.500 9-4.500 12 0-3 4.500-9 4.500-12 0z" fill="#808080"/><circle cx="47" cy="33" r="2.500" fill="#444"/>
<path d="M58 52c3-4.500 9-4.500 12 0-3 4.500-9 4.500-12 0z" fill="#808080"/><circle cx="64" cy="52" r="2.500" fill="#444"/>
<path d="M0 82c3-4.500 9-4.500 12 0-3 4.500-9 4.500-12 0z" fill="#808080"/><circle cx="6" cy="82" r="2.500" fill="#444"/>
<path d="M0 121c3-4.500 9-4.500 12 0-3 4.500-9 4.500-12 0z" fill="#808080"/><circle cx="6" cy="121" r="2.500" fill="#444"/>
</svg>
<!-- thumbs -->
<div style="left:1195px;top:572px;width:24px;height:31px;background:#fff;border:1px solid #333"></div>
<svg style="left:1193px;top:570px" width="28" height="35"><path d="M1 6V1h6M21 1h6v6M1 29v5h6M27 29v5h-6" fill="none" stroke="#16305a" stroke-width="1.300"/><path d="M10 12l5-3 4 3 2 6-1 7-6 2-5-1-1-7zM10 18h11M14 9l-1 18" fill="none" stroke="#333" stroke-width=".8"/></svg>
<div style="left:1195px;top:649px;width:24px;height:31px;border:1px solid #333;background:repeating-conic-gradient(#cfcfcf 0 25%,#fff 0 50%) 0 0/16px 16px"></div>
<div style="left:1208px;top:664px;width:10px;height:4px;background:#000"></div>
<div style="left:1195px;top:688px;width:24px;height:31px;background:#fff;border:1px solid #333"></div>
<span class="t" style="left:1229px;top:583px">Calque 0 copie</span>
<span class="t" style="left:1398px;top:579px;font:italic bold 13px/16px 'Liberation Serif',serif;color:#444">fx</span>
<span class="t" style="left:1230px;top:610px">Effets</span>
<span class="t" style="left:1247px;top:629px;font-size:10.2px">Incrustation couleur</span>
<span class="t" style="left:1229px;top:660px">Calque 1</span>
<span class="t" style="left:1229px;top:699px">Calque 0</span>
<div style="left:1161px;top:849px;width:279px;height:2px;background:#8a8a8a"></div>
<div style="left:1161px;top:851px;width:279px;height:19px;background:#d6d6d6"></div>
<svg style="left:1236px;top:854px" width="175" height="14">
<rect x=".8" y="3" width="7" height="5" rx="2.500" fill="none" stroke="#999" stroke-width="1.300"/><rect x="6" y="3" width="7" height="5" rx="2.500" fill="none" stroke="#999" stroke-width="1.300"/>
<path d="M55 2h12v10H55z" fill="#777" stroke="#555"/><circle cx="61" cy="7" r="2.500" fill="#ddd"/>
<circle cx="88" cy="6" r="5" fill="#555"/><path d="M91 2A5 5 0 0 1 85 10z" fill="#ddd"/><path d="M109 1.500h4l2 2h5v8h-11z" fill="#ddd" stroke="#333"/>
<path d="M137 1.500h9v10h-6l-3-3z" fill="#ddd" stroke="#333"/><path d="M137 8.500h3v3z" fill="#333"/>
<path d="M163 2h8M161 3.500h12M163 5v7h8V5M165.500 6v5M168.500 6v5M165 2V.5h4V2" fill="none" stroke="#333"/>
</svg>
<span class="t" style="left:1264px;top:851px;font:italic bold 14px/16px 'Liberation Serif',serif;color:#444">fx</span>
<div style="left:1279px;top:864px;border:2px solid transparent;border-top:3px solid #333"></div>
<div style="left:1332px;top:864px;border:2px solid transparent;border-top:3px solid #333"></div>
</div>
</body></html>
